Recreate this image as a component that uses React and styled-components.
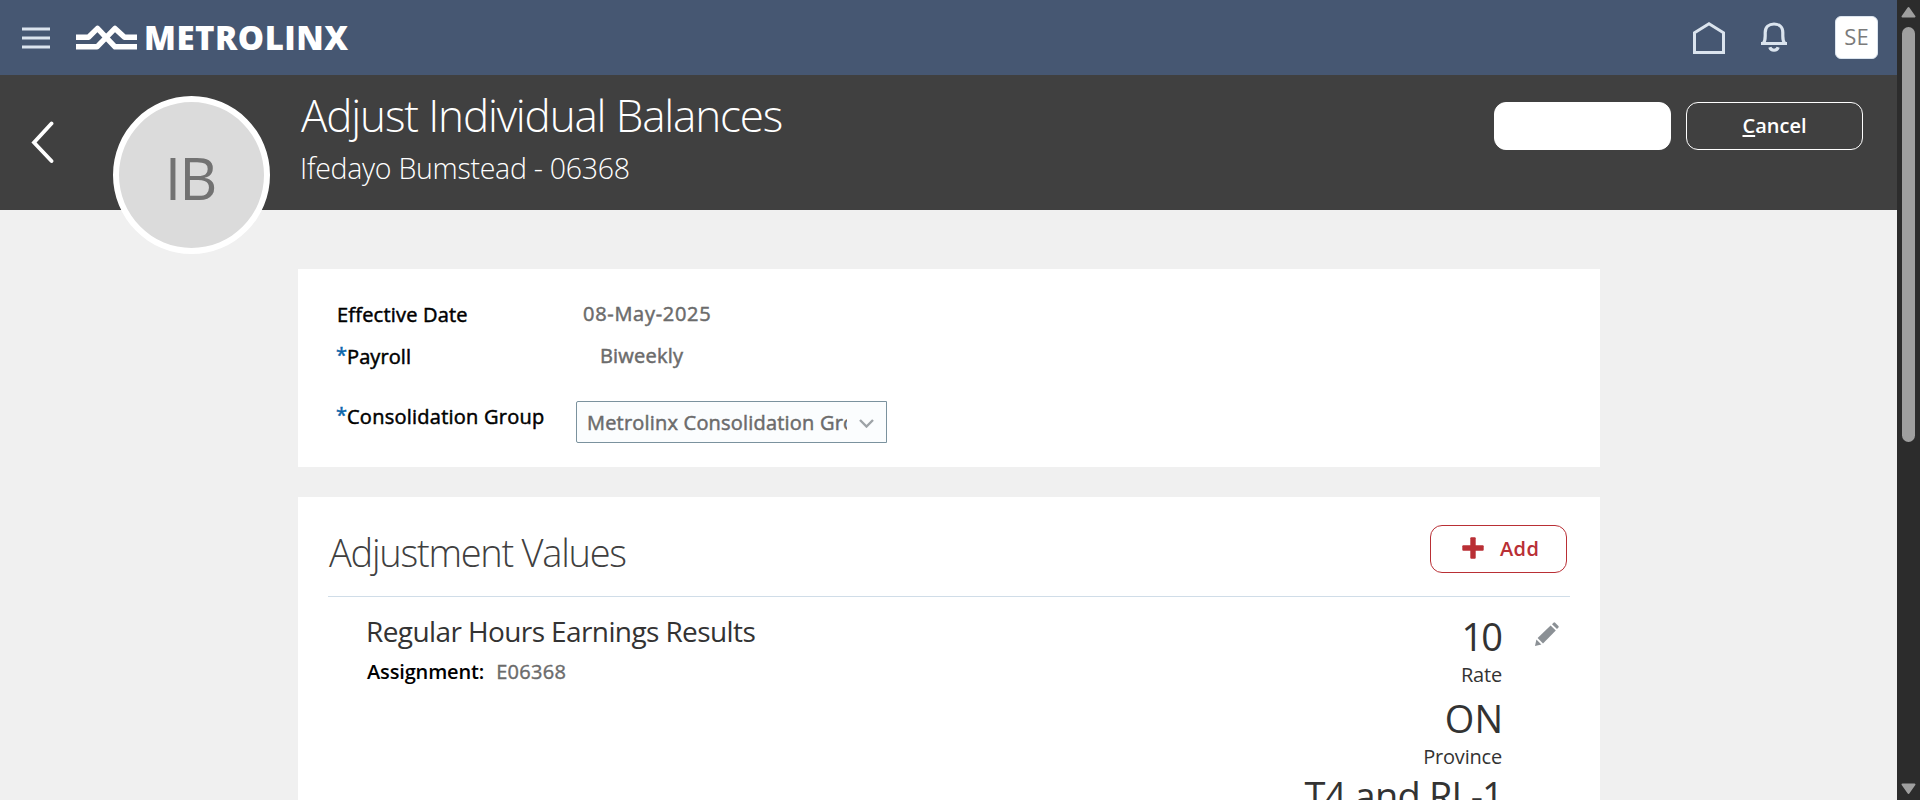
import React from "react";
import styled, { createGlobalStyle } from "styled-components";

const GlobalStyle = createGlobalStyle`
  *, *::before, *::after { box-sizing: border-box; }
  html, body { margin: 0; padding: 0; height: 100%; overflow: hidden; }
  body { font-family: "Open Sans", "Noto Sans", sans-serif; font-size: 20px; background: #f0f0f0; }
`;

const Screen = styled.div`
  display: flex;
  width: 100%;
  height: 800px;
  overflow: hidden;
`;

const Page = styled.div`
  flex: 1;
  min-width: 0;
  height: 800px;
  overflow: hidden;
  background: #f0f0f0;
`;

/* Top bar */
const TopBar = styled.header`
  display: flex;
  align-items: center;
  height: 75px;
  padding: 0 19px 0 22px;
  background: #465772;
`;

const HamburgerIcon = styled.svg`
  width: 28px;
  height: 24px;
  margin-right: 26px;
`;

const Brand = styled.div`
  display: flex;
  align-items: center;
`;

const BrandMark = styled.svg`
  width: 61px;
  height: 26px;
  margin-right: 7px;
`;

const BrandName = styled.span`
  color: #fff;
  font-size: 33px;
  font-weight: 800;
  line-height: 40px;
  letter-spacing: 0.5px;
`;

const TopActions = styled.div`
  display: flex;
  align-items: center;
  margin-left: auto;
`;

const HomeIcon = styled.svg`
  width: 32px;
  height: 32px;
  margin-right: 36px;
`;

const BellIcon = styled.svg`
  width: 26px;
  height: 31px;
  margin-right: 48px;
`;

const UserBadge = styled.div`
  width: 43px;
  height: 43px;
  border-radius: 6px;
  border: 1px solid #dbe4ee;
  background: #fff;
  color: #7b7b7b;
  font-size: 22px;
  line-height: 39px;
  text-align: center;
`;

/* Dark title band */
const TitleBand = styled.section`
  display: flex;
  align-items: flex-start;
  height: 135px;
  padding: 0 34px 0 31px;
  background: #404040;
`;

const BackIcon = styled.svg`
  width: 24px;
  height: 43px;
  margin-top: 46px;
`;

const Avatar = styled.div`
  flex: none;
  width: 157px;
  height: 158px;
  margin: 21px 31px 0 58px;
  padding: 1px 3px 0 0;
  border: 6px solid #fff;
  border-radius: 50%;
  background: #dbdbdb;
  color: #727272;
  font-size: 59px;
  line-height: 148px;
  letter-spacing: -2px;
  text-align: center;
`;

const Headings = styled.div`
  padding-top: 10px;
  color: #fff;
  white-space: nowrap;
`;

const PageTitle = styled.h1`
  margin: 0;
  font-size: 44px;
  font-weight: 320;
  line-height: 60px;
  letter-spacing: -1.15px;
`;

const PageSubtitle = styled.p`
  margin: -1px 0 0 -1px;
  font-size: 28.5px;
  font-weight: 320;
  line-height: 48px;
  letter-spacing: -0.28px;
`;

const BandActions = styled.div`
  display: flex;
  gap: 15px;
  margin: 27px 0 0 auto;
`;

const BandButton = styled.button`
  width: 177px;
  height: 48px;
  padding: 0;
  border: 1px solid #fff;
  border-radius: 12px;
  background: ${(p) => (p.$filled ? "#fff" : "transparent")};
  color: #fff;
  font: 600 20px/46px "Open Sans", sans-serif;
`;

const AccessKey = styled.span`
  text-decoration: underline;
  text-decoration-thickness: 2px;
  text-underline-offset: 2px;
`;

/* Cards */
const Cards = styled.main`
  display: flex;
  flex-direction: column;
  gap: 30px;
  width: 1302px;
  margin: 59px 0 0 298px;
`;

const FormCard = styled.section`
  height: 198px;
  padding: 32px 39px 0;
  background: #fff;
`;

const FormRow = styled.div`
  display: grid;
  grid-template-columns: ${(p) => p.$labelWidth || 246}px 1fr;
  height: 42px;
  margin-top: ${(p) => (p.$spaced ? 16 : 0)}px;
  line-height: 28px;
`;

const FieldLabel = styled.label`
  display: flex;
  padding-top: ${(p) => p.$drop || 0}px;
  color: #000;
  font-weight: 500;
  -webkit-text-stroke: 0.5px #000;
  letter-spacing: ${(p) => p.$track || 0}px;
  white-space: nowrap;
`;

const Required = styled.span`
  width: 11px;
  margin: -2px 0 0 -1px;
  color: #0b66ab;
  -webkit-text-stroke: 0.5px #0b66ab;
`;

const FieldValue = styled.span`
  margin: -1px 0 0 ${(p) => p.$indent || 0}px;
  color: #6b6b6b;
  font-weight: 500;
  -webkit-text-stroke: 0.5px #6b6b6b;
  letter-spacing: ${(p) => p.$track || 0}px;
`;

const SelectBox = styled.div`
  display: flex;
  align-items: center;
  width: 311px;
  height: 42px;
  padding: 2px 12px 0 10px;
  border: 1px solid #7b929e;
  border-radius: 2px 0 0 2px;
  background: #fbfdfe;
`;

const SelectText = styled.span`
  width: 260px;
  overflow: hidden;
  color: #6b6b6b;
  font-weight: 500;
  letter-spacing: 0.2px;
  -webkit-text-stroke: 0.5px #6b6b6b;
  white-space: nowrap;
`;

const ChevronIcon = styled.svg`
  width: 15px;
  height: 9px;
  margin: 0 0 0 12px;
`;

const ValuesCard = styled.section`
  height: 400px;
  padding: 0 30px;
  background: #fff;
`;

const SectionHeader = styled.div`
  display: flex;
  justify-content: space-between;
  height: 100px;
  padding-right: 3px;
  border-bottom: 1px solid #d0dde8;
`;

const SectionTitle = styled.h2`
  margin: 27px 0 0 1px;
  color: #404040;
  font-size: 38px;
  font-weight: 300;
  line-height: 56px;
  letter-spacing: -1.25px;
`;

const AddButton = styled.button`
  display: flex;
  align-items: center;
  width: 137px;
  height: 48px;
  margin-top: 28px;
  padding: 0 0 0 31px;
  border: 1px solid #b92f35;
  border-radius: 12px;
  background: #fff;
  color: #b92f35;
  font: 600 20px/28px "Open Sans", sans-serif;
  letter-spacing: 0.4px;
`;

const PlusIcon = styled.svg`
  width: 22px;
  height: 22px;
  margin: 0 16px 2px 0;
`;

const ItemRow = styled.article`
  display: flex;
  padding: 0 11px 0 39px;
`;

const ItemInfo = styled.div`
  flex: 1;
  padding-top: 14px;
`;

const ItemName = styled.h3`
  margin: 0 0 7px -1px;
  color: #333;
  font-size: 28px;
  font-weight: 400;
  line-height: 40px;
  letter-spacing: -0.6px;
`;

const ItemMeta = styled.div`
  display: flex;
  gap: 12px;
  line-height: 28px;
`;

const MetaLabel = styled.span`
  color: #000;
  font-weight: 600;
  letter-spacing: -0.15px;
`;

const MetaValue = styled.span`
  color: #6b6b6b;
  font-weight: 500;
  letter-spacing: 0.3px;
  -webkit-text-stroke: 0.4px #6b6b6b;
`;

const Figures = styled.div`
  display: flex;
  flex-direction: column;
  gap: 6px;
  padding-top: 15px;
  text-align: right;
`;

const Figure = styled.div`
  margin-top: ${(p) => p.$lift || 0}px;
  color: #333;
`;

const FigureValue = styled.div`
  margin-right: ${(p) => p.$pull || 0}px;
  font-size: 38px;
  line-height: 48px;
  letter-spacing: ${(p) => p.$track || 0}px;
`;

const FigureLabel = styled.div`
  margin-right: -1px;
  padding-top: 1px;
  line-height: 27px;
  letter-spacing: -0.2px;
`;

const PencilIcon = styled.svg`
  width: 24px;
  height: 24px;
  margin: 25px 0 0 34px;
`;

/* Scroll bar */
const ScrollTrack = styled.aside`
  display: flex;
  flex-direction: column;
  align-items: center;
  width: 23px;
  height: 800px;
  padding: 6px 0 5px;
  background: #2c2c2c;
`;

const ScrollArrow = styled.svg`
  width: 15px;
  height: 12px;
`;

const ScrollThumb = styled.div`
  width: 13px;
  height: 415px;
  margin: 9px 0 auto;
  border-radius: 7px;
  background: #9f9f9f;
`;

const FIGURES = [
  { value: "10", label: "Rate", track: -2, pull: 0 },
  { value: "ON", label: "Province", pull: -2 },
  { value: "T4 and RL-1", track: -0.8, lift: -5, pull: -2 },
];

export default function App() {
  return (
    <Screen>
      <GlobalStyle />
      <Page>
        <TopBar>
          <HamburgerIcon viewBox="0 0 28 24" fill="none" stroke="#dbe4ee" strokeWidth="3">
            <path d="M0 2.9H28M0 11.9H28M0 20.9H28" />
          </HamburgerIcon>
          <Brand>
            <BrandMark viewBox="0 0 61 26" fill="none" stroke="#fff" strokeWidth="5.4" strokeLinejoin="round">
              <path d="M0 12.2H12.5L21.5 3.4L39 21.8H61" />
              <path d="M0 21.8H21L39 3.4L48.5 12.2H61" />
            </BrandMark>
            <BrandName>METROLINX</BrandName>
          </Brand>
          <TopActions>
            <HomeIcon viewBox="0 0 32 32" fill="none" stroke="#dbe4ee" strokeWidth="3">
              <path d="M1.5 10.8L16 1.8L30.5 10.8V30.5H1.5Z" />
            </HomeIcon>
            <BellIcon viewBox="0 0 26 31" fill="none" stroke="#dbe4ee" strokeWidth="3.2">
              <path d="M0 21.5H26M2.2 21.5C4 19.5 4.2 17 4.2 14V10.5C4.2 5 8 2 13 2S21.8 5 21.8 10.5V14C21.8 17 22 19.5 23.8 21.5" />
              <path d="M8.8 25.3C10 29.2 16 29.2 17.2 25.3" />
            </BellIcon>
            <UserBadge>SE</UserBadge>
          </TopActions>
        </TopBar>

        <TitleBand>
          <BackIcon viewBox="0 0 24 43" fill="none" stroke="#fff" strokeWidth="3.8" strokeLinecap="round">
            <path d="M20.5 2.5L3 21.5L20.5 40" />
          </BackIcon>
          <Avatar>IB</Avatar>
          <Headings>
            <PageTitle>Adjust Individual Balances</PageTitle>
            <PageSubtitle>Ifedayo Bumstead - 06368</PageSubtitle>
          </Headings>
          <BandActions>
            <BandButton $filled />
            <BandButton>
              <AccessKey>C</AccessKey>ancel
            </BandButton>
          </BandActions>
        </TitleBand>

        <Cards>
          <FormCard>
            <FormRow>
              <FieldLabel $track={0.2}>Effective Date</FieldLabel>
              <FieldValue $track={0.7}>08-May-2025</FieldValue>
            </FormRow>
            <FormRow>
              <FieldLabel $track={0.1}>
                <Required>*</Required>Payroll
              </FieldLabel>
              <FieldValue $indent={17} $track={0.2}>Biweekly</FieldValue>
            </FormRow>
            <FormRow $spaced $labelWidth={239}>
              <FieldLabel $drop={2} $track={0.25}>
                <Required>*</Required>Consolidation Group
              </FieldLabel>
              <SelectBox>
                <SelectText>Metrolinx Consolidation Group</SelectText>
                <ChevronIcon viewBox="0 0 15 9" fill="none" stroke="#9ea3a7" strokeWidth="2.4">
                  <path d="M1 1L7.5 7.5L14 1" />
                </ChevronIcon>
              </SelectBox>
            </FormRow>
          </FormCard>

          <ValuesCard>
            <SectionHeader>
              <SectionTitle>Adjustment Values</SectionTitle>
              <AddButton>
                <PlusIcon viewBox="0 0 22 22" fill="#b92f35">
                  <rect x="8.3" y="0.3" width="5.4" height="21.4" rx="1" />
                  <rect x="0.3" y="8.3" width="21.4" height="5.4" rx="1" />
                </PlusIcon>
                Add
              </AddButton>
            </SectionHeader>
            <ItemRow>
              <ItemInfo>
                <ItemName>Regular Hours Earnings Results</ItemName>
                <ItemMeta>
                  <MetaLabel>Assignment:</MetaLabel>
                  <MetaValue>E06368</MetaValue>
                </ItemMeta>
              </ItemInfo>
              <Figures>
                {FIGURES.map((f) => (
                  <Figure key={f.value} $lift={f.lift}>
                    <FigureValue $track={f.track} $pull={f.pull}>{f.value}</FigureValue>
                    {f.label && <FigureLabel>{f.label}</FigureLabel>}
                  </Figure>
                ))}
              </Figures>
              <PencilIcon viewBox="0 0 24 24" fill="#8b9095">
                <path d="M0 24L1.4 17.6L6.4 22.6Z" />
                <path d="M2.6 16L15.6 3.4L20.8 8.4L8 21.4Z" />
                <path d="M17 2.2L18.5 0.7Q19.3 0 20.1 0.7L23.4 4Q24.1 4.8 23.4 5.6L22 7Z" />
              </PencilIcon>
            </ItemRow>
          </ValuesCard>
        </Cards>
      </Page>

      <ScrollTrack>
        <ScrollArrow viewBox="0 0 15 12" fill="#9f9f9f" stroke="#9f9f9f" strokeWidth="2" strokeLinejoin="round">
          <path d="M7.5 2L13.5 10.5H1.5Z" />
        </ScrollArrow>
        <ScrollThumb />
        <ScrollArrow viewBox="0 0 15 12" fill="#9f9f9f" stroke="#9f9f9f" strokeWidth="2" strokeLinejoin="round">
          <path d="M7.5 10L13.5 1.5H1.5Z" />
        </ScrollArrow>
      </ScrollTrack>
    </Screen>
  );
}
